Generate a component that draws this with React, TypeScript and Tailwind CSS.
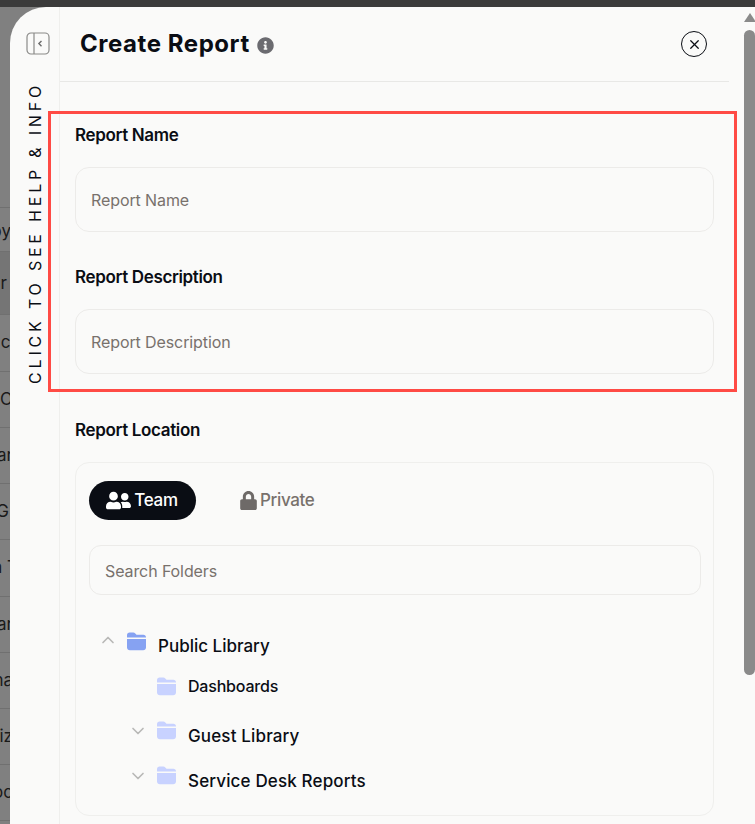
import React from "react";
import { ChevronUp, ChevronDown, X } from "lucide-react";
import { FaUserFriends, FaLock, FaInfoCircle } from "react-icons/fa";

const FONT = "font-['Inter','Noto_Sans',sans-serif]";

function Folder({ color, size = 19 }: { color: string; size?: number }) {
  return (
    <svg width={size} height={size} viewBox="0 0 19 19" className="shrink-0">
      <path d="M0 3.2C0 1.6 1.1.6 2.6.6h3.6c.9 0 1.5.3 2.1.9l1.2 1.3h6.9c1.5 0 2.6 1 2.6 2.4v.3H0z" fill={color} />
      <path d="M0 7h19v8.4c0 1.6-1.2 2.8-2.8 2.8H2.8C1.2 18.2 0 17 0 15.4z" fill={color} />
    </svg>
  );
}

const rows: { t: string; h: number; dark?: boolean; c: string }[] = [
  { t: "py", h: 44, c: "-mr-[1px] mt-[5px]" },
  { t: "r", h: 63, dark: true, c: "mr-[3px] mt-[1px]" },
  { t: "ct", h: 57, c: "-mr-[6px]" },
  { t: "O", h: 56, c: "-mr-[3px]" },
  { t: "ar", h: 56, c: "-mr-[3px] mt-[1px]" },
  { t: "G", h: 56, c: "mr-[1px] mt-[1px]" },
  { t: "n T", h: 57, c: "-mr-[8px]" },
  { t: "ar", h: 56, c: "-mr-[3px] mt-[1px]" },
  { t: "na", h: 56, c: "-mr-[3px] mt-[1px]" },
  { t: "Piz", h: 56, c: "-mr-[3px] mt-[1px]" },
  { t: "oc", h: 56, c: "-mr-[3px] mt-[1px]" },
];

function Field({ label, mt }: { label: string; mt: string }) {
  return (
    <div className={mt}>
      <div className="h-[20px] text-[17px] leading-[20px] font-semibold tracking-[-0.35px] text-[#0a0d14]">{label}</div>
      <input
        placeholder={label}
        className="mt-[22px] block h-[65px] w-full rounded-[14px] border border-[#ecebe9] bg-[#fafaf9] px-[15px] text-[16px] tracking-[-0.1px] text-[#0a0d14] outline-none placeholder:text-[#78716c]"
      />
    </div>
  );
}

export default function App() {
  return (
    <div className={`${FONT} relative h-[824px] w-[755px] overflow-hidden bg-[#808080]`}>
      <div className="h-[7px] bg-[#3b3b3b]" />
      <div className="flex h-[817px]">
        <div className="w-[10px] shrink-0 overflow-hidden pt-[200px] text-[17px] text-[#1a1a1a]">
          <div className="border-t border-[#707070]">
            {rows.map((r, i) => (
              <div
                key={i}
                style={{ height: r.h }}
                className={`flex items-center justify-end whitespace-nowrap border-b border-[#707070] ${r.dark ? "bg-[#757575]" : ""}`}
              >
                <span className={r.c}>{r.t}</span>
              </div>
            ))}
          </div>
        </div>
        <div className="flex min-w-0 flex-1 overflow-hidden rounded-tl-[36px] bg-[#fafaf9]">
          <div className="flex w-[50px] shrink-0 flex-col items-start border-r border-[#efefed]">
            <svg width="24" height="24" viewBox="0 0 24 24" fill="none" className="ml-[16px] mt-[25px]" stroke="#8a8a88" strokeWidth="1.2">
              <rect x="1" y="1" width="22" height="21" rx="4" />
              <path d="M8 1v21" />
              <path d="M15.5 9l-2.6 2.6 2.6 2.6" strokeWidth="1.4" stroke="#6b6b6b" />
            </svg>
            <div className="ml-[17px] mt-[26px] whitespace-nowrap text-[16px] font-normal leading-[16px] tracking-[3.8px] text-[#0a0d14] [writing-mode:vertical-rl] rotate-180">
              CLICK TO SEE HELP &amp; INFO
            </div>
          </div>
          <div className="min-w-0 flex-1">
            <div className="mr-[15px] flex h-[75px] items-center justify-between border-b border-[#e8e8e6] pl-[20px] pr-[22px]">
              <div className="flex items-center gap-[7px]">
                <span className="text-[24px] font-bold leading-[30px] tracking-[0.55px] text-[#0a0d14]">Create Report</span>
                <FaInfoCircle size={17} color="#6b6b70" className="mt-[2px]" />
              </div>
              <div className="flex h-[26px] w-[26px] items-center justify-center rounded-full border-[1.5px] border-[#0a0d14]">
                <X size={15} strokeWidth={2} color="#0a0d14" />
              </div>
            </div>
            <div className="pl-[15px] pr-[30px]">
              <Field label="Report Name" mt="mt-[43px]" />
              <Field label="Report Description" mt="mt-[35px]" />
              <div className="mt-[46px] h-[20px] text-[17px] font-semibold leading-[20px] tracking-[-0.35px] text-[#0a0d14]">Report Location</div>
              <div className="mt-[22px] h-[354px] rounded-[14px] border border-[#efefed] pl-[13px] pr-[12px] pt-[18px]">
                <div className="flex items-center">
                  <div className="flex h-[39px] w-[107px] items-center justify-center gap-[3px] rounded-full bg-[#0a0d14] pr-[1px] text-[17px] font-medium leading-[37px] tracking-[-0.25px] text-white">
                    <FaUserFriends size={25} color="#ffffff" className="mt-[-1px]" />
                    <span>Team</span>
                  </div>
                  <div className="ml-[43px] flex items-center gap-[2px] text-[17px] font-medium tracking-[-0.35px] text-[#78716c]">
                    <FaLock size={19} color="#6e6a68" className="mt-[-1px]" />
                    <span>Private</span>
                  </div>
                </div>
                <input
                  placeholder="Search Folders"
                  className="mt-[25px] block h-[50px] w-full rounded-[12px] border border-[#ecebe9] bg-[#fafaf9] px-[15px] pt-[1px] text-[16px] tracking-[-0.1px] outline-none placeholder:text-[#78716c]"
                />
                <div className="relative mt-[38px] text-[#0a0d14]">
                  <div className="flex h-[20px] items-start">
                    <ChevronUp size={20} color="#b8b8b6" strokeWidth={2} className="ml-[9px] mt-[-3px]" />
                    <div className="ml-[9px] mt-[-1px]"><Folder color="#86a2f2" /></div>
                    <span className="ml-[12px] mt-[3px] text-[17px] font-medium leading-[20px] text-[#0a0d14]">Public Library</span>
                  </div>
                  <div className="mt-[23px] flex h-[20px] items-center pl-[68px]">
                    <Folder color="#c8d2ff" />
                    <span className="ml-[12px] text-[16px] font-medium leading-[20px] tracking-[-0.2px]">Dashboards</span>
                  </div>
                  <div className="mt-[30px] flex h-[20px] items-start">
                    <ChevronDown size={20} color="#b8b8b6" strokeWidth={2} className="ml-[39px] mt-[-5px]" />
                    <div className="ml-[9px] mt-[-5px]"><Folder color="#c8d2ff" /></div>
                    <span className="ml-[12px] text-[17px] font-medium leading-[20px] tracking-[0.15px]">Guest Library</span>
                  </div>
                  <div className="mt-[25px] flex h-[20px] items-start">
                    <ChevronDown size={20} color="#b8b8b6" strokeWidth={2} className="ml-[39px] mt-[-5px]" />
                    <div className="ml-[9px] mt-[-5px]"><Folder color="#c8d2ff" /></div>
                    <span className="ml-[12px] text-[17px] font-medium leading-[20px] tracking-[0.15px]">Service Desk Reports</span>
                  </div>
                </div>
              </div>
            </div>
          </div>
          <div className="flex w-[11px] shrink-0 flex-col items-center">
            <div className="mt-[6px] h-0 w-0 border-x-[6px] border-b-[9px] border-x-transparent border-b-[#8a8a8a]" />
            <div className="mt-[8px] h-[645px] w-full rounded-full bg-[#8a8a8a]" />
          </div>
        </div>
      </div>
      <div className="pointer-events-none absolute left-[48px] top-[111px] h-[281px] w-[689px] border-[3px] border-[#ff4b45]" />
    </div>
  );
}
